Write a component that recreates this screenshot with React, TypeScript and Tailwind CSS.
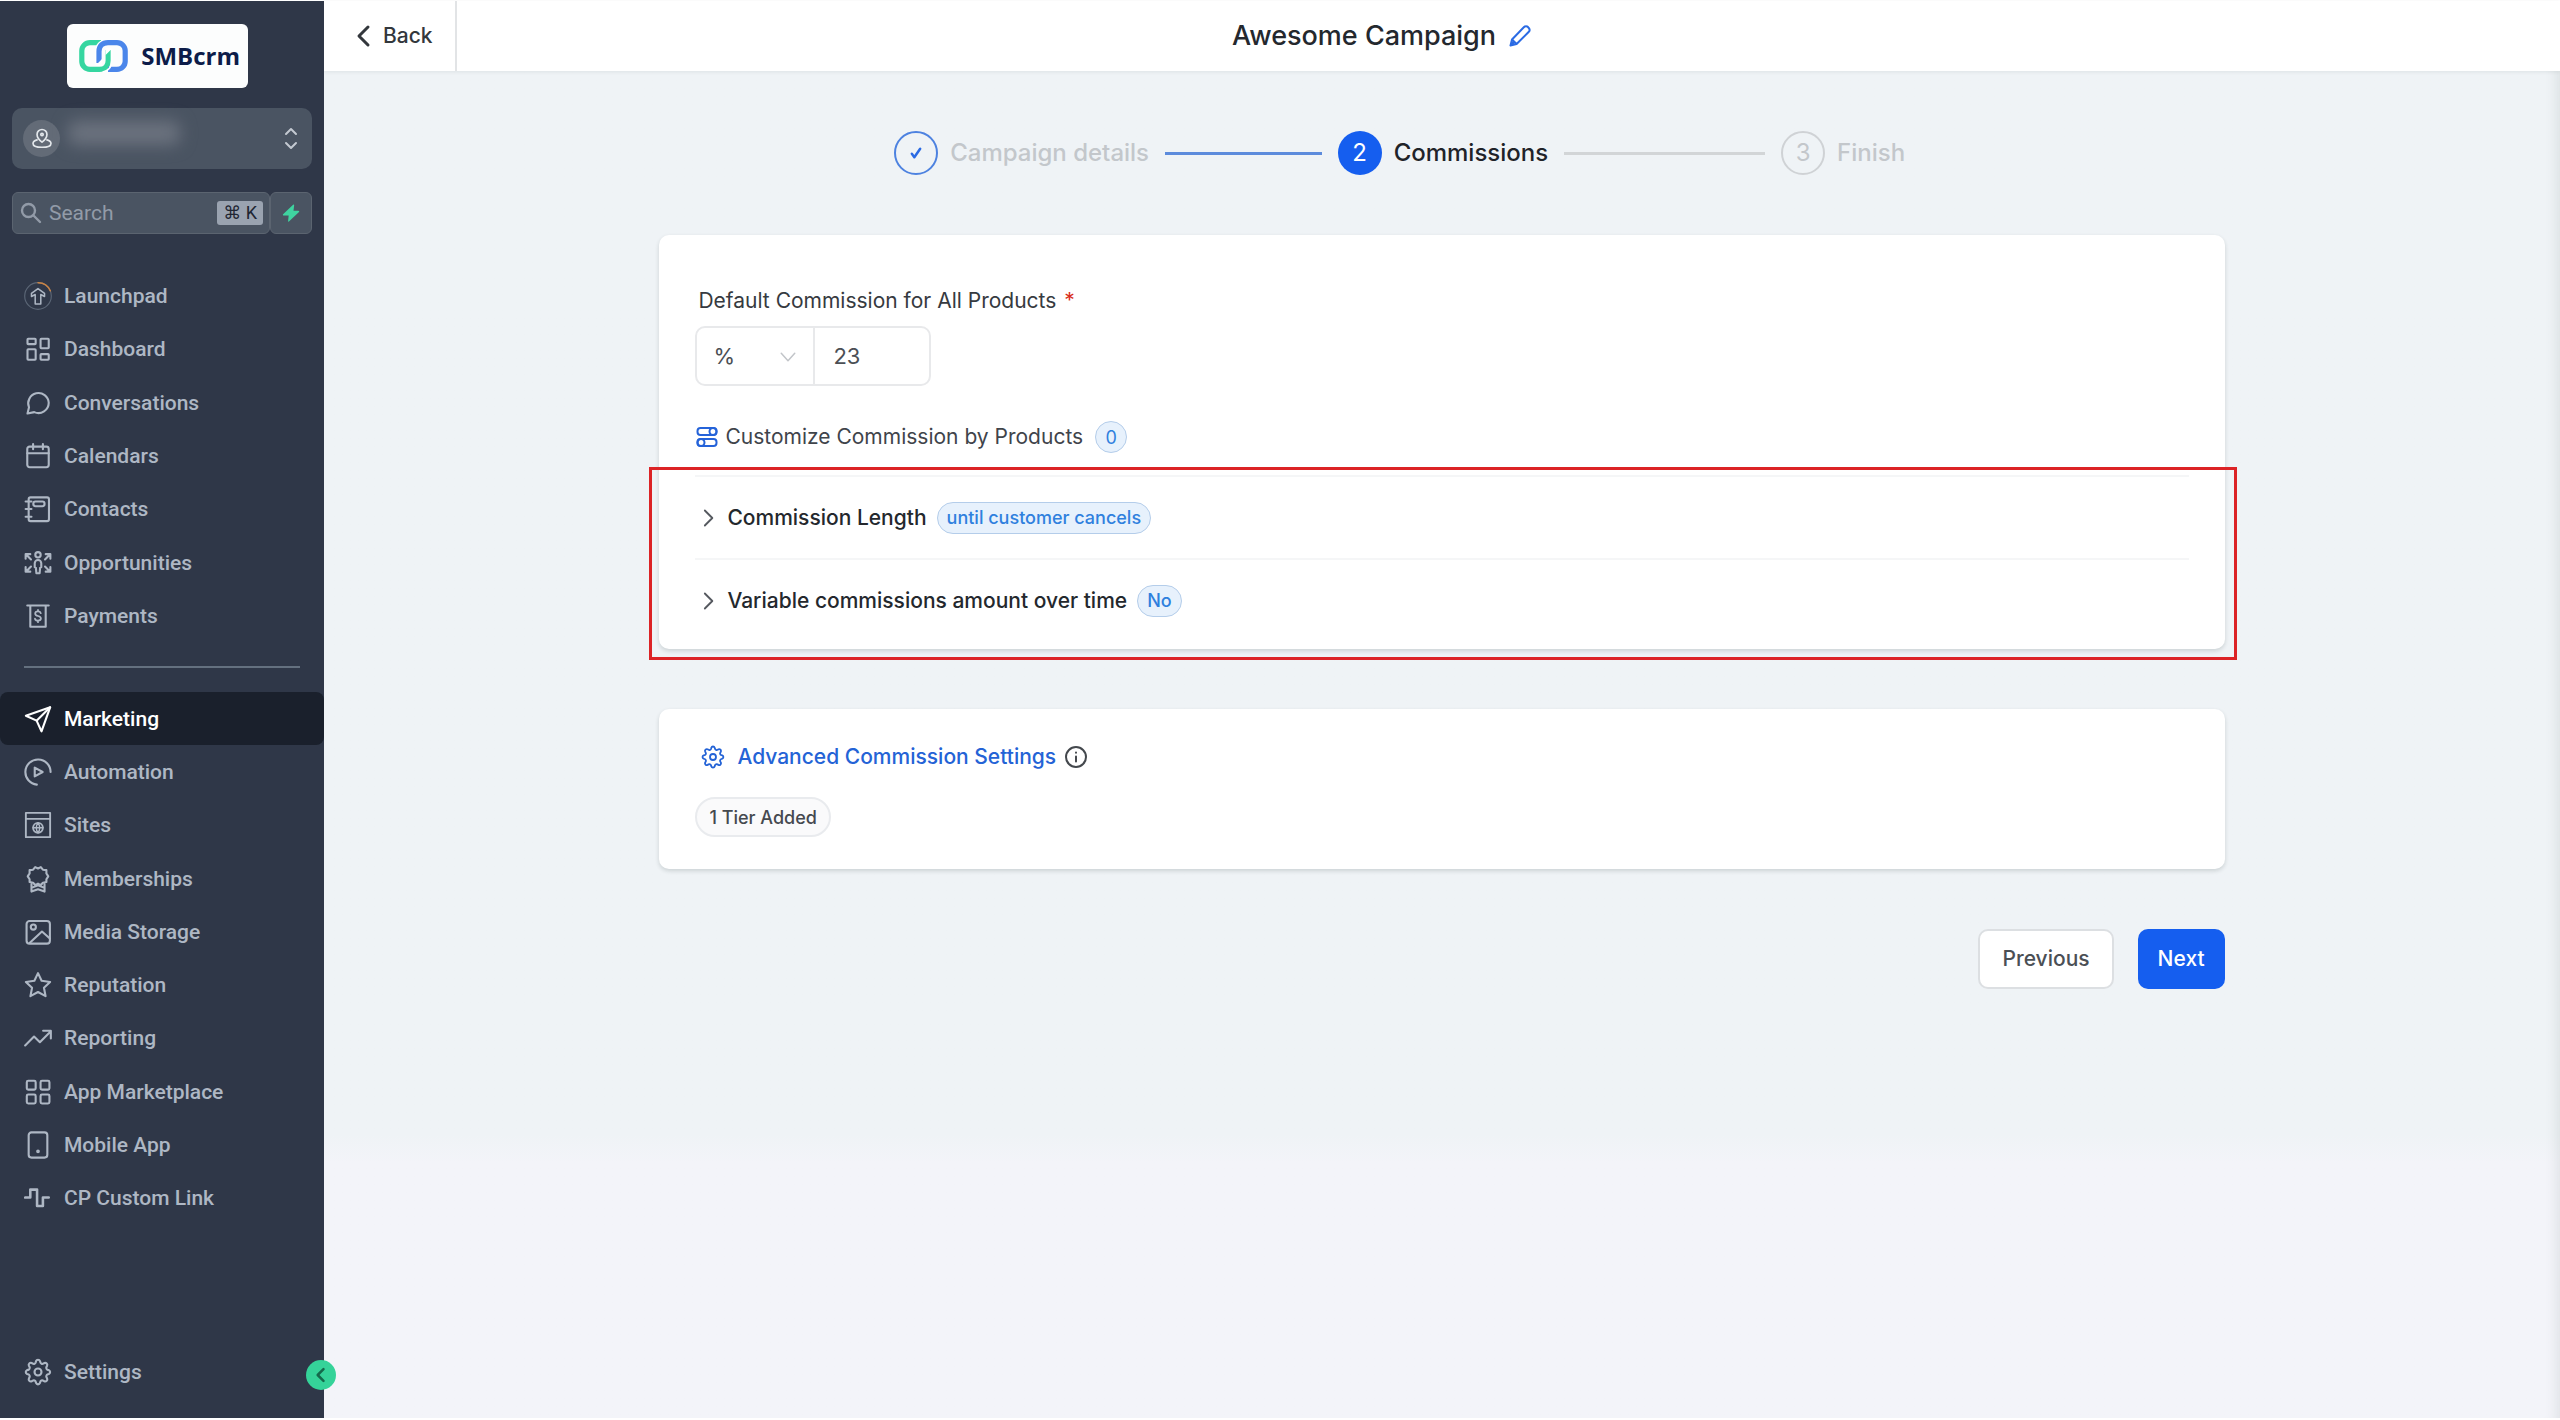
import React, { useState } from 'react';

type IconProps = { className?: string };

interface NavItem {
  label: string;
  icon: React.FC<IconProps>;
  active?: boolean;
}

const Svg: React.FC<IconProps & { children: React.ReactNode; width?: number }> = ({ className = 'size-7', children, width = 1.8 }) => (
  <svg
    className={`shrink-0 ${className}`}
    viewBox="0 0 24 24"
    fill="none"
    stroke="currentColor"
    strokeWidth={width}
    strokeLinecap="round"
    strokeLinejoin="round"
    aria-hidden="true"
  >
    {children}
  </svg>
);

const LaunchpadIcon: React.FC<IconProps> = () => (
  <Svg width={1.3}>
    <circle cx="12" cy="12" r="11.4" stroke="#5b6676" strokeWidth="1" />
    <path d="M12 .6A11.4 11.4 0 0 1 22.6 7.6" stroke="#c98344" strokeWidth="1.2" />
    <path d="M12 5.6 6.4 9.8v2.6l3.2-1.7v8.1h4.8v-8.1l3.2 1.7V9.8z" />
  </Svg>
);

const DashboardIcon: React.FC<IconProps> = () => (
  <Svg>
    <rect x="3" y="3.2" width="7" height="4.6" rx=".6" />
    <rect x="14.2" y="3.2" width="7" height="8.2" rx=".6" />
    <rect x="3" y="12.2" width="7" height="9" rx=".6" />
    <rect x="14.2" y="16.4" width="7" height="4.8" rx=".6" />
  </Svg>
);

const ConversationsIcon: React.FC<IconProps> = () => (
  <Svg>
    <path d="M21.2 11.8a8.8 8.8 0 0 1-12.4 8L3 21l1.3-5.3A8.8 8.8 0 1 1 21.2 11.8z" />
  </Svg>
);

const CalendarIcon: React.FC<IconProps> = () => (
  <Svg>
    <rect x="2.8" y="4" width="18.4" height="17.6" rx="2" />
    <path d="M2.8 9.6h18.4M7.8 1.8v4.4M16.2 1.8v4.4" />
  </Svg>
);

const ContactsIcon: React.FC<IconProps> = () => (
  <Svg>
    <rect x="4" y="2" width="17.4" height="20.4" rx="1.6" />
    <rect x="8" y="5.6" width="9.6" height="4" rx="1.8" />
    <path d="M1.4 5.6h5M1.4 12h5M1.4 18.6h5" />
  </Svg>
);

const OpportunitiesIcon: React.FC<IconProps> = () => (
  <Svg>
    <circle cx="12" cy="5" r="2.3" />
    <path d="M9.2 15.6v-3.4a2.8 2.8 0 0 1 5.6 0v3.4l-1 .6-.4 4.600h-2.800l-.4-4.600z" />
    <path d="m2 5 4 4M1.4 8.4V4.400h4M22 5l-4 4M22.600 8.400V4.400h-4M2 19l4-4M1.400 15.400v4h4M22 19l-4-4M22.600 15.400v4h-4" />
  </Svg>
);

const PaymentsIcon: React.FC<IconProps> = () => (
  <Svg>
    <path d="M2.8 3h18.4M5.4 3v18.2h13.2V3" />
    <path d="M14.4 9.6c-.3-1-1.2-1.5-2.4-1.5-1.4 0-2.4.7-2.4 1.9 0 2.7 4.9 1.3 4.9 4 0 1.2-1 2-2.5 2-1.3 0-2.3-.6-2.6-1.7M12 6.8v1.3M12 16v1.3" strokeWidth="1.5" />
  </Svg>
);

const MarketingIcon: React.FC<IconProps> = () => (
  <Svg>
    <path d="M22.4 2 15 22.6 10.8 13.4 1.6 9.2z" />
    <path d="M22.4 2 10.8 13.4" />
  </Svg>
);

const AutomationIcon: React.FC<IconProps> = () => (
  <Svg>
    <path d="M22.8 12A10.8 10.8 0 1 0 11 22.8" />
    <path d="M9.2 8.2v7.6l6.8-3.8z" />
  </Svg>
);

const SitesIcon: React.FC<IconProps> = () => (
  <Svg width={1.6}>
    <rect x="1.6" y="1.6" width="20.8" height="20.8" />
    <path d="M1.6 6.8h20.8" />
    <circle cx="12" cy="14.4" r="4.2" />
    <path d="M7.8 14.4h8.4M12 10.2c-2 2.4-2 6 0 8.4M12 10.2c2 2.4 2 6 0 8.4" strokeWidth="1.2" />
  </Svg>
);

const MembershipsIcon: React.FC<IconProps> = () => (
  <Svg>
    <path d="m9.6 1.800 2.400 1.200 2.400-1.200 1.800 2.200 3 .4v2.800l1.600 2.500-1.600 2.500v2.400l-3 .6-1.800 2-2.400-1.200-2.400 1.200-1.800-2-3-.6v-2.400L3.200 9.700l1.600-2.500V4.400l3-.4z" />
    <path d="M6.400 16.400V22.800l5.600-2 5.600 2V16.400M6.400 19.600 12 17.400l5.600 2.200" />
  </Svg>
);

const MediaIcon: React.FC<IconProps> = () => (
  <Svg>
    <rect x="2.2" y="2.6" width="20" height="19.4" rx="2.6" />
    <circle cx="8" cy="7.8" r="2.2" />
    <path d="M5 21.2 15.4 11.6l6.8 6" />
  </Svg>
);

const StarIcon: React.FC<IconProps> = () => (
  <Svg>
    <path d="m12 1.8 3.1 6.6 7.3 1-5.3 5 1.4 7.2L12 18l-6.500 3.600 1.400-7.200-5.300-5 7.300-1z" />
  </Svg>
);

const ReportingIcon: React.FC<IconProps> = () => (
  <Svg>
    <path d="m1 18.4 7.600-7.600 5 4.800L23 6.200M16.400 5.800H23V12.400" />
  </Svg>
);

const AppsIcon: React.FC<IconProps> = () => (
  <Svg>
    <rect x="2.4" y="2.4" width="7.6" height="7.6" rx="1.2" />
    <rect x="14.2" y="2.4" width="7.6" height="7.6" rx="1.2" />
    <rect x="2.4" y="14.2" width="7.6" height="7.6" rx="1.2" />
    <rect x="14.2" y="14.2" width="7.6" height="7.6" rx="1.2" />
  </Svg>
);

const MobileIcon: React.FC<IconProps> = () => (
  <Svg>
    <rect x="4" y="1.2" width="16" height="21.6" rx="2.4" />
    <circle cx="12" cy="17.4" r=".7" fill="currentColor" />
  </Svg>
);

const PulseIcon: React.FC<IconProps> = () => (
  <Svg width={2.2}>
    <path d="M1 11.6h4.4V4.8h5.8V18.8h5V11.6h5" />
  </Svg>
);

const GearIcon: React.FC<IconProps> = ({ className }) => (
  <Svg className={className}>
    <circle cx="12" cy="12" r="3" />
    <path d="M10.3 2.7a1.8 1.8 0 0 1 3.4 0l.3 1a1.8 1.8 0 0 0 2.6 1.1l.9-.5a1.8 1.8 0 0 1 2.3 2.4l-.5.9a1.8 1.8 0 0 0 1.1 2.6l.9.2a1.8 1.8 0 0 1 0 3.3l-.9.3a1.8 1.8 0 0 0-1.1 2.6l.5.9a1.8 1.8 0 0 1-2.4 2.4l-.9-.5a1.8 1.8 0 0 0-2.6 1.1l-.2.9a1.8 1.8 0 0 1-3.4 0l-.2-.9a1.8 1.8 0 0 0-2.600-1.100l-.9.5a1.8 1.8 0 0 1-2.400-2.400l.5-.9a1.8 1.8 0 0 0-1.100-2.600l-1-.3a1.8 1.8 0 0 1 0-3.300l1-.2a1.8 1.8 0 0 0 1.100-2.600l-.5-.9a1.8 1.8 0 0 1 2.400-2.400l.9.5a1.8 1.8 0 0 0 2.600-1.100z" />
  </Svg>
);

const Logo = () => (
  <svg className="h-8 w-[49px] shrink-0" viewBox="0 0 49 32" fill="none" aria-hidden="true">
    <path d="M22 2.6H11a8.2 8.2 0 0 0-8.200 8.200v10.400A8.200 8.200 0 0 0 11 29.400h9.400c5.600 0 8.800-3.400 8.800-9V10" stroke="#35d6a0" strokeWidth="5.200" />
    <path d="M17 25V11.400c0-6.600 4-11 11-11h2" stroke="#fff" strokeWidth="2" />
    <path d="M20 23V11.400c0-5.400 3.400-8.800 9-8.800h9a8.200 8.200 0 0 1 8.200 8.200v10.400a8.200 8.200 0 0 1-8.200 8.200H29" stroke="#4b86ea" strokeWidth="5.200" />
    <path d="M32.600 9v12c0 6-3.600 10-9 11" stroke="#fff" strokeWidth="1.600" />
    <path d="M17 26v-1l6-6v7zM32.600 8v1l-6 6V8z" fill="#fff" />
  </svg>
);

const mainNav: NavItem[] = [
  { label: 'Launchpad', icon: LaunchpadIcon },
  { label: 'Dashboard', icon: DashboardIcon },
  { label: 'Conversations', icon: ConversationsIcon },
  { label: 'Calendars', icon: CalendarIcon },
  { label: 'Contacts', icon: ContactsIcon },
  { label: 'Opportunities', icon: OpportunitiesIcon },
  { label: 'Payments', icon: PaymentsIcon }
];

const toolsNav: NavItem[] = [
  { label: 'Marketing', icon: MarketingIcon, active: true },
  { label: 'Automation', icon: AutomationIcon },
  { label: 'Sites', icon: SitesIcon },
  { label: 'Memberships', icon: MembershipsIcon },
  { label: 'Media Storage', icon: MediaIcon },
  { label: 'Reputation', icon: StarIcon },
  { label: 'Reporting', icon: ReportingIcon },
  { label: 'App Marketplace', icon: AppsIcon },
  { label: 'Mobile App', icon: MobileIcon },
  { label: 'CP Custom Link', icon: PulseIcon }
];

const NavLink: React.FC<{ item: NavItem }> = ({ item }) => {
  const Icon = item.icon;
  return (
    <a
      href="#"
      aria-current={item.active ? 'page' : undefined}
      className={`flex min-h-[53px] items-center gap-3 rounded-lg pl-6 font-medium ${
        item.active ? 'bg-[#1a202c] text-white' : 'text-[#aeb7c4]'
      }`}
    >
      <Icon />
      {item.label}
    </a>
  );
};

const Sidebar = () => (
  <aside className="relative flex w-[324px] shrink-0 flex-col bg-[#2f3748] font-['Roboto',sans-serif] text-[21px] leading-6">
    <div className="mr-[76px] ml-[67px] mt-[23px] flex h-16 items-center justify-between rounded-md bg-[#fcfdfd] pr-2 pl-3">
      <Logo />
      <span className="font-['Open_Sans',sans-serif] text-[24px] font-bold text-[#0d1c49]">SMBcrm</span>
    </div>

    <button type="button" aria-label="Switch account" className="mx-3 mt-5 flex h-[61px] items-center rounded-[10px] bg-[#4a5462] pr-3.5 pl-[11px]">
      <span className="flex size-[37px] items-center justify-center rounded-full bg-[#636b77] text-[#e4e8ec]">
        <Svg className="size-[22px]">
          <path d="M12 15.5s5.4-4.3 5.4-8.5a5.4 5.4 0 0 0-10.8 0c0 4.2 5.4 8.5 5.4 8.5z" />
          <circle cx="12" cy="7.2" r="1.3" />
          <path d="M6.6 13C4 13.7 2.2 15 2.2 16.8c0 2.6 4.4 4.2 9.8 4.2s9.8-1.600 9.800-4.200c0-1.800-1.800-3.100-4.400-3.800" />
        </Svg>
      </span>
      <span className="mb-3 ml-2 h-6 w-28 rounded-lg bg-[#6b727e] blur-[8px]" />
      <svg className="ml-auto h-7 w-3.5 text-[#c3c9d1]" viewBox="0 0 14 28" fill="none" stroke="currentColor" strokeWidth="2" strokeLinecap="round" strokeLinejoin="round" aria-hidden="true">
        <path d="m2 9 5-5 5 5M2 18l5 5 5-5" />
      </svg>
    </button>

    <div className="mx-3 mt-[23px] flex h-[42px]">
      <label className="flex min-w-0 flex-1 items-center rounded-md border border-[#5b6470] bg-[#4a5462] px-1.5 text-[#929ba8]">
        <Svg className="size-6" width={2.4}>
          <circle cx="9.5" cy="9.5" r="6.5" />
          <path d="m14.5 14.5 6.5 6.5" />
        </Svg>
        <input type="text" aria-label="Search" placeholder="Search" className="ml-1.5 w-0 min-w-0 flex-1 bg-transparent outline-none placeholder:text-[#929ba8]" />
        <kbd className="rounded-[3px] bg-[#9aa3b0] px-1.5 font-['Roboto','DejaVu_Sans',sans-serif] text-[18px] text-[#1f2633]">⌘ K</kbd>
      </label>
      <button type="button" aria-label="Quick actions" className="flex w-[42px] items-center justify-center rounded-md border border-[#5b6470] bg-[#4a5462] text-[#3fd3a0]">
        <svg className="size-5" viewBox="0 0 24 24" fill="currentColor" aria-hidden="true">
          <path d="M14.5 2 2.5 13.4c-.6.6-.2 1.6.7 1.6h6L8.5 22c0 .6.5.7 1 .3L21.6 10.8c.6-.6.2-1.6-.7-1.6H15l.8-6.500c0-.9-.7-1.200-1.300-.7z" />
        </svg>
      </button>
    </div>

    <nav className="mt-[35px] flex flex-col">
      <div className="grid h-[374px] auto-rows-fr">
        {mainNav.map((item) => (
          <NavLink key={item.label} item={item} />
        ))}
      </div>
      <hr className="mx-6 mt-[23px] mb-6 border-t-2 border-[#64707f]" />
      <div className="grid h-[533px] auto-rows-fr">
        {toolsNav.map((item) => (
          <NavLink key={item.label} item={item} />
        ))}
      </div>
    </nav>

    <div className="mt-auto mb-5">
      <NavLink item={{ label: 'Settings', icon: GearIcon }} />
    </div>

    <button type="button" aria-label="Collapse sidebar" className="absolute -right-3 bottom-7 flex size-[30px] items-center justify-center rounded-full bg-[#35d399] text-[#14694b]">
      <Svg className="size-5" width={3}>
        <path d="m15 5-7 7 7 7" />
      </Svg>
    </button>
  </aside>
);

const Pill: React.FC<{ children: React.ReactNode }> = ({ children }) => (
  <span className="flex h-8 min-w-8 items-center justify-center rounded-full border border-[#b4cdea] bg-[#e7f1fc] px-[9px] text-[18px] text-[#2f80de]">
    {children}
  </span>
);

const Stepper = () => (
  <ol className="grid grid-cols-3 pl-[15%] text-[24px] font-medium text-[#c3c7cb]">
    <li className="flex h-11 items-center">
      <span className="flex size-11 items-center justify-center rounded-full border-2 border-[#4d82e0] text-[#2b6be4]">
        <Svg className="size-5" width={3}>
          <path d="m7 13 3 4 7-10" />
        </Svg>
      </span>
      <span className="ml-3">Campaign details</span>
      <span className="mr-4 ml-4 h-[3px] flex-1 bg-[#5c8bdc]" />
    </li>
    <li className="flex h-11 items-center text-[#1f2329]" aria-current="step">
      <span className="flex size-11 items-center justify-center rounded-full bg-[#155eef] font-normal text-white">2</span>
      <span className="ml-3">Commissions</span>
      <span className="mr-4 ml-4 h-[3px] flex-1 bg-[#d2d5d7]" />
    </li>
    <li className="flex h-11 items-center">
      <span className="flex size-11 items-center justify-center rounded-full border-2 border-[#cfd2d5] font-normal">3</span>
      <span className="ml-3">Finish</span>
    </li>
  </ol>
);

const options = [
  { title: 'Commission Length', value: 'until customer cancels' },
  { title: 'Variable commissions amount over time', value: 'No' }
];

const CommissionCard = () => {
  const [unit, setUnit] = useState('%');
  const [amount, setAmount] = useState('23');

  return (
    <section className="relative mt-[60px] rounded-[10px] bg-white px-9 pt-[50px] pb-2 shadow-[0_2px_4px_rgba(16,40,40,0.16)]">
      <label htmlFor="amount" className="block pl-[3px] leading-8 text-[#363a40]">
        Default Commission for All Products
        <span className="ml-2 text-[#d92d20]">*</span>
      </label>
      <div className="mt-[9px] grid h-[60px] w-[236px] grid-cols-2 rounded-[10px] border-2 border-[#e8e9eb] text-[22px] text-[#4b4f55]">
        <div className="relative">
          <select
            aria-label="Commission type"
            value={unit}
            onChange={(e) => setUnit(e.target.value)}
            className="size-full appearance-none bg-transparent pl-4 outline-none"
          >
            <option>%</option>
            <option>$</option>
          </select>
          <Svg className="pointer-events-none absolute top-5 right-4 size-[18px] text-[#c2c5c9]" width={2}>
            <path d="m3 7 9 10 9-10" />
          </Svg>
        </div>
        <input
          id="amount"
          type="text"
          value={amount}
          onChange={(e) => setAmount(e.target.value)}
          className="w-full min-w-0 border-l-2 border-[#e8e9eb] bg-transparent pl-[18px] outline-none"
        />
      </div>

      <button type="button" className="mt-[35px] flex h-8 items-center text-[#3f444b]">
        <Svg className="size-6 text-[#2563d9]" width={2}>
          <rect x="2.5" y="3" width="19" height="7" rx="3" />
          <circle cx="18" cy="6.5" r="3.5" />
          <rect x="2.5" y="14" width="19" height="7" rx="3" />
          <circle cx="6" cy="17.5" r="3.5" />
        </Svg>
        <span className="mr-3 ml-1.5">Customize Commission by Products</span>
        <Pill>0</Pill>
      </button>

      <ul className="mt-[22px]">
        {options.map((option) => (
          <li key={option.title} className="border-t-2 border-[#f5f6f7]">
            <button type="button" className="flex h-[81px] w-full items-center pl-1 font-medium text-[#24282d]">
              <Svg className="size-5 text-[#55595f]" width={2.2}>
                <path d="m7 3 9 9-9 9" />
              </Svg>
              <span className="mr-2.5 ml-2">{option.title}</span>
              <Pill>{option.value}</Pill>
            </button>
          </li>
        ))}
      </ul>

      {/* Highlight around the collapsible options */}
      <div className="pointer-events-none absolute top-[232px] -right-3 -bottom-[11px] -left-2.5 border-[3px] border-[#dc2326]" />
    </section>
  );
};

const AdvancedCard = () => (
  <section className="mt-[60px] rounded-[10px] bg-white px-9 pt-8 pb-8 shadow-[0_2px_4px_rgba(16,40,40,0.16)]">
    <div className="flex h-8 items-center pl-1.5">
      <a href="#" className="flex items-center gap-3 font-medium text-[#2463d6]">
        <GearIcon className="size-6" />
        Advanced Commission Settings
      </a>
      <Svg className="ml-2 size-6 text-[#44484d]" width={2}>
        <circle cx="12" cy="12" r="10" />
        <path d="M12 11.5v5M12 7.6v.1" />
      </Svg>
    </div>
    <span className="mt-6 inline-flex h-10 items-center rounded-full border-2 border-[#e9ebee] bg-[#fafafb] px-3 align-top text-[18px] font-medium text-[#45494f]">
      1 Tier Added
    </span>
  </section>
);

const App = () => (
  <div className="flex min-h-screen bg-white pt-px pb-0.5 font-['Inter',sans-serif] text-[21px]">
    <Sidebar />

    <div className="flex min-w-0 flex-1 flex-col bg-gradient-to-b from-[#eff3f6] from-80% to-[#f3f4f9] to-82% shadow-[inset_-14px_0_14px_-12px_rgba(20,40,30,0.1)]">
      <header className="flex h-[70px] bg-white shadow-[0_1px_4px_rgba(16,40,40,0.08)]">
        <button type="button" className="flex w-[133px] shrink-0 items-center border-r-2 border-[#e2e4e6] pl-7 font-medium text-[#33373c]">
          <Svg className="size-6" width={3}>
            <path d="m16 3-9 9 9 9" />
          </Svg>
          <span className="ml-[7px]">Back</span>
        </button>
        <div className="flex flex-1 items-center justify-center gap-3">
          <h1 className="text-[27px] font-medium text-[#24282e]">Awesome Campaign</h1>
          <button type="button" aria-label="Rename campaign" className="text-[#2b6be4]">
            <Svg className="size-6" width={2}>
              <path d="M2.5 21.5 4 15.5 15.8 3.3a3 3 0 0 1 4.4 0l.4.500a3 3 0 0 1 0 4.200L8.600 20zM4 15.500 8.600 20M2.500 21.500l3.200-3.400" />
            </Svg>
          </button>
        </div>
        <div className="w-[253px] shrink-0" />
      </header>

      <main className="mx-auto w-[70%] pt-[60px] pb-16">
        <Stepper />
        <CommissionCard />
        <AdvancedCard />
        <div className="mt-[60px] flex justify-end gap-6 font-medium">
          <button type="button" className="h-[60px] rounded-[10px] border-2 border-[#dcdfe2] bg-white px-[22px] text-[#4b4f55]">Previous</button>
          <button type="button" className="h-[60px] rounded-[10px] bg-[#155eef] px-5 text-white">Next</button>
        </div>
      </main>
    </div>
  </div>
);

export default App;
